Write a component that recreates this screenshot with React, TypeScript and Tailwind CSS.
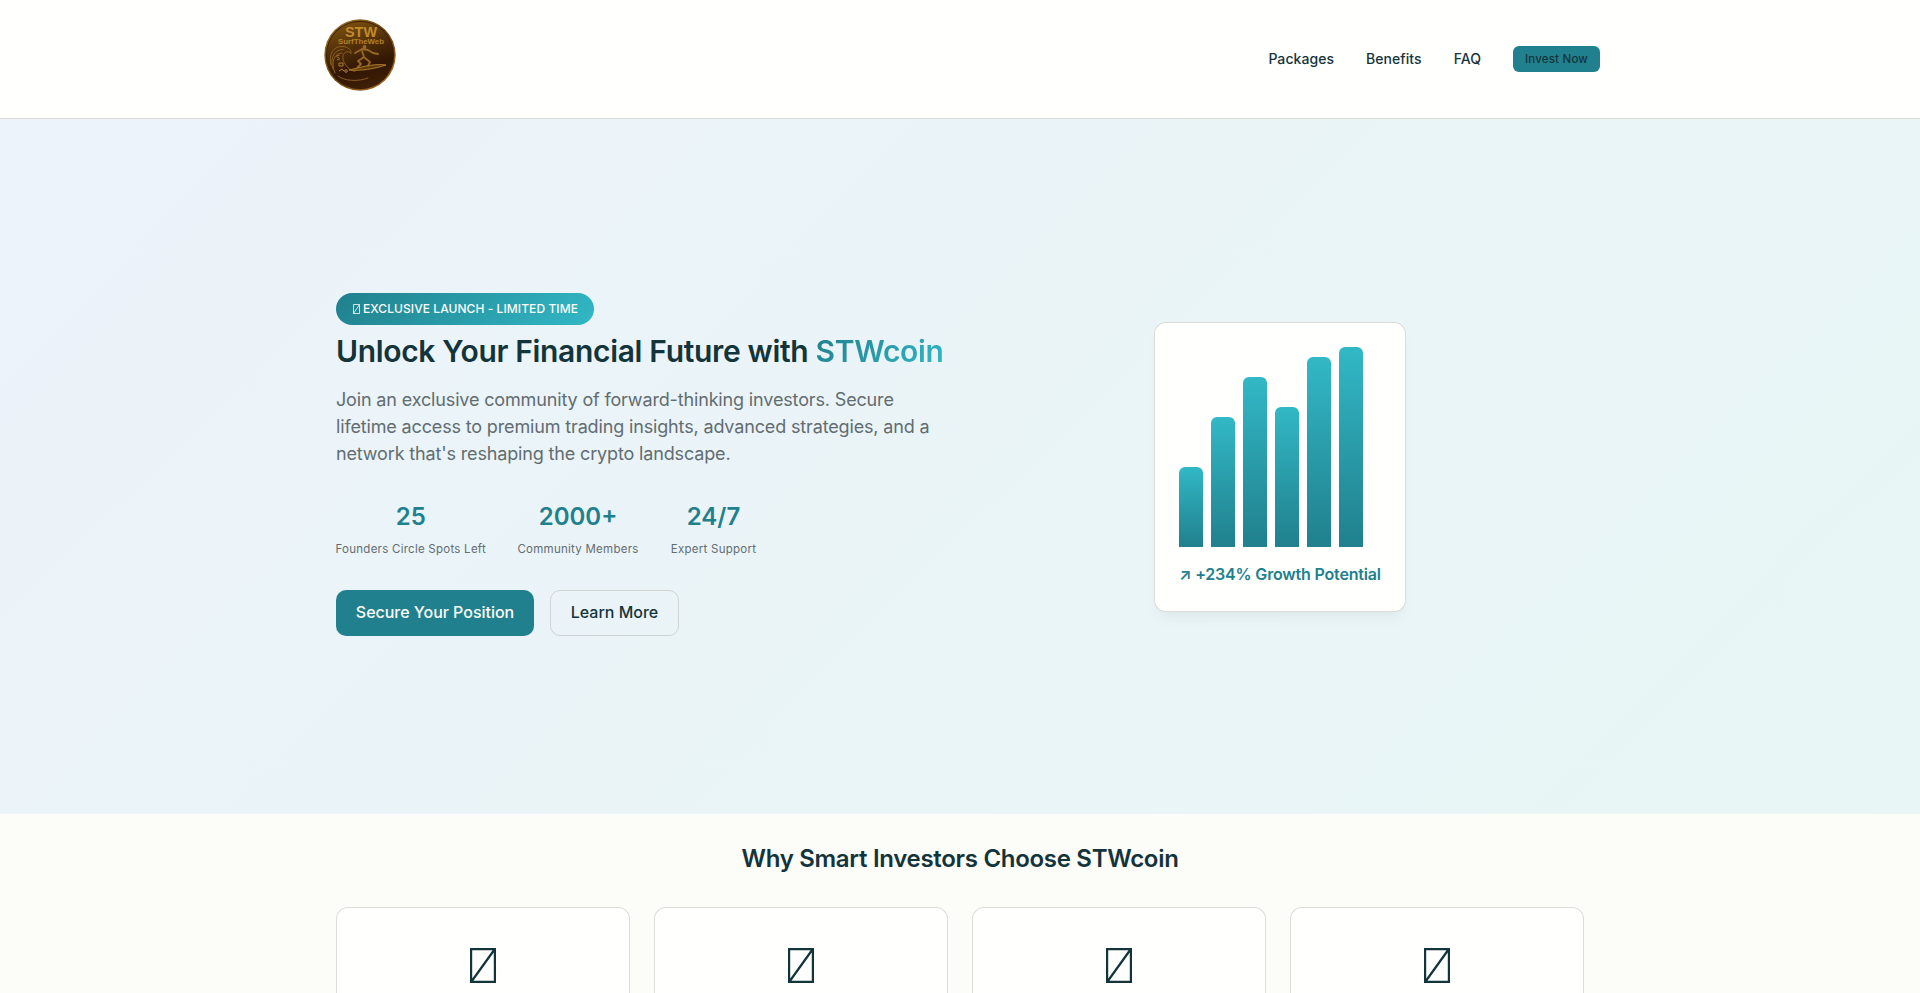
import React from "react";

const navLinks = ["Packages", "Benefits", "FAQ"];

const stats = [
  { value: "25", label: "Founders Circle Spots Left", width: "w-[149.5px]" },
  { value: "2000+", label: "Community Members", width: "w-[121px]" },
  { value: "24/7", label: "Expert Support", width: "w-[86px]" },
];

const bars = [80, 130, 170, 140, 190, 200];

const CoinLogo = () => (
  <svg className="block h-20 w-20" viewBox="0 0 80 80">
    <defs>
      <linearGradient id="coin" x1="0.3" y1="0" x2="0.6" y2="1">
        <stop offset="0" stopColor="#7a500f" />
        <stop offset="0.4" stopColor="#4e2c08" />
        <stop offset="0.7" stopColor="#321604" />
        <stop offset="1" stopColor="#3e1f06" />
      </linearGradient>
      <linearGradient id="rim" x1="0" y1="0" x2="1" y2="1">
        <stop offset="0" stopColor="#a67a26" />
        <stop offset="0.5" stopColor="#6d4511" />
        <stop offset="1" stopColor="#b0702c" />
      </linearGradient>
    </defs>
    <circle cx="40" cy="40" r="35.700" fill="url(#rim)" />
    <circle cx="40" cy="40" r="34.200" fill="#3b1f06" />
    <circle cx="40" cy="40" r="33.200" fill="url(#coin)" />
    <g fontWeight="700" fontFamily="Liberation Sans, sans-serif" textAnchor="middle">
      <text x="41" y="21.500" fontSize="14" fill="#c08c2c" textLength="32" lengthAdjust="spacingAndGlyphs">
        STW
      </text>
      <text x="41" y="29" fontSize="8" fill="#b08028" textLength="46" lengthAdjust="spacingAndGlyphs">
        SurfTheWeb
      </text>
    </g>
    {/* wave */}
    <g fill="none" stroke="#8f6325" strokeWidth="0.9" strokeLinecap="round">
      <path d="M11 50C8 39 14 31 22 31.500c6 0 10 4 9 7-2-3-7-2-8 2-1 6 4 14 12 16" />
      <path d="M13 54C9 43 15 34 23 34.500M15 58c-5-12 0-20 7-20M18 61c6 5 20 6 30 2" />
    </g>
    {/* surfer and board */}
    <path d="M29 55c12 1 25-1 37-5-8-1-14 0-20 1s-11 3-17 4z" fill="#5d380d" stroke="#b5832f" strokeWidth="0.9" />
    <path
      d="M35 38l7-4 6 1 5 3 5 1M42 36l2 6-6 4 3 3-4 4M45 43l5 4-2 4"
      fill="none"
      stroke="#966828"
      strokeWidth="1.8"
      strokeLinecap="round"
      strokeLinejoin="round"
    />
    <circle cx="44.500" cy="32" r="1.900" fill="#98692a" />
    <g fill="none" stroke="#ad7c2e" strokeWidth="1">
      <path d="M19.500 40.500c-3-1-4 1-1.500 2s1.500 3-1 2M19 48h4v3h-4zM19 56l3-2 2 2" />
      <circle cx="26" cy="56" r="1.300" />
    </g>
  </svg>
);

const MissingGlyph = () => (
  <svg className="block h-[35px] w-[26px]" viewBox="0 0 26 35" fill="none" stroke="#13343b" strokeWidth="2.2">
    <path d="M1.100 1.100h23.800v32.800H1.100zM1.500 33.500L24.500 1.500" />
  </svg>
);

const App = () => {
  return (
    <div className="h-[993px] overflow-hidden bg-[#fcfcf9] font-['Inter',sans-serif] text-[#13343b]">
      <header className="h-[119px] border-b border-[#dfdcd6] bg-[#fffffd]">
        <div className="mx-auto flex w-[1280px] items-start justify-between">
          <div className="pt-[15px]">
            <CoinLogo />
          </div>
          <nav className="flex items-center gap-8 pt-[46px] text-sm font-medium tracking-[0.06px]">
            {navLinks.map((link) => (
              <a key={link} href="#">
                {link}
              </a>
            ))}
            <a
              href="#"
              className="flex h-[26px] w-[87px] items-center justify-center rounded-md bg-[#21808d] pt-px text-[11.5px] tracking-[0.2px]"
            >
              Invest Now
            </a>
          </nav>
        </div>
      </header>

      <section className="flex h-[695px] items-center bg-linear-135 from-[#ecf3fa] to-[#e8f6f5]">
        <div className="mx-auto grid w-[1248px] grid-cols-2 items-center gap-8">
          <div className="pb-1">
            <div className="flex h-8 w-[258px] items-center gap-[3px] rounded-full bg-linear-135 from-[#21808d] to-[#32b8c6] pl-[17px] text-xs font-medium tracking-[0.07px] whitespace-nowrap text-[#fcfcf9]">
              <svg className="h-[10px] w-[7px]" viewBox="0 0 7 10" fill="none" stroke="currentColor" strokeWidth="0.8">
                <path d="M0.500 0.500h6v9h-6zM0.500 9.500l6-9" />
              </svg>
              EXCLUSIVE LAUNCH - LIMITED TIME
            </div>
            <h1 className="mt-2 text-[30px] leading-9 font-semibold tracking-[-0.33px] whitespace-nowrap">
              Unlock Your Financial Future with{" "}
              <span className="bg-linear-135 from-[#21808d] to-[#32b8c6] bg-clip-text text-transparent">
                STWcoin
              </span>
            </h1>
            <p className="mt-[17px] text-lg leading-[27px] tracking-[-0.15px] whitespace-nowrap text-[#626c71]">
              Join an exclusive community of forward-thinking investors. Secure
              <br />
              lifetime access to premium trading insights, advanced strategies, and a
              <br />
              network that's reshaping the crypto landscape.
            </p>
            <div className="mt-8 flex gap-8 text-center">
              {stats.map((stat) => (
                <div key={stat.label} className={stat.width}>
                  <div className="text-2xl leading-9 font-semibold text-[#21808d]">{stat.value}</div>
                  <div className="mt-[5px] flex justify-center text-[11.5px] leading-[18px] tracking-[0.25px] whitespace-nowrap text-[#626c71]">
                    {stat.label}
                  </div>
                </div>
              ))}
            </div>
            <div className="mt-8 flex gap-4 text-base font-medium">
              <button className="h-[46px] w-[198px] rounded-[10px] bg-[#21808d] pb-0.5 tracking-[-0.03px] text-[#fcfcf9]">
                Secure Your Position
              </button>
              <button className="h-[46px] w-[129px] rounded-[10px] border border-[#5e524033] pb-0.5">Learn More</button>
            </div>
          </div>

          <div className="flex justify-center">
            <div className="h-[290px] w-[252px] rounded-xl border border-[#5e524033] bg-[#fffffd] bg-clip-border p-6 shadow-[0_10px_15px_-3px_rgba(0,0,0,0.04),0_4px_6px_-2px_rgba(0,0,0,0.02)]">
              <div className="flex h-[200px] items-end gap-2">
                {bars.map((height) => (
                  <div
                    key={height}
                    className="w-6 rounded-t-md bg-linear-to-t from-[#21808d] to-[#32b8c6]"
                    style={{ height }}
                  />
                ))}
              </div>
              <div className="mt-[15px] text-base font-semibold tracking-[-0.18px] whitespace-nowrap text-[#21808d]">
                ↗ +234% Growth Potential
              </div>
            </div>
          </div>
        </div>
      </section>

      <section className="mx-auto w-[1248px] pt-7">
        <h2 className="text-center text-2xl leading-[34px] font-semibold tracking-[-0.3px]">
          Why Smart Investors Choose STWcoin
        </h2>
        <div className="mt-[31px] grid grid-cols-4 gap-6">
          {[1, 2, 3, 4].map((card) => (
            <div
              key={card}
              className="flex h-[280px] justify-center rounded-xl border border-[#5e524033] bg-[#fffffd] pt-10"
            >
              <MissingGlyph />
            </div>
          ))}
        </div>
      </section>
    </div>
  );
};

export default App;
